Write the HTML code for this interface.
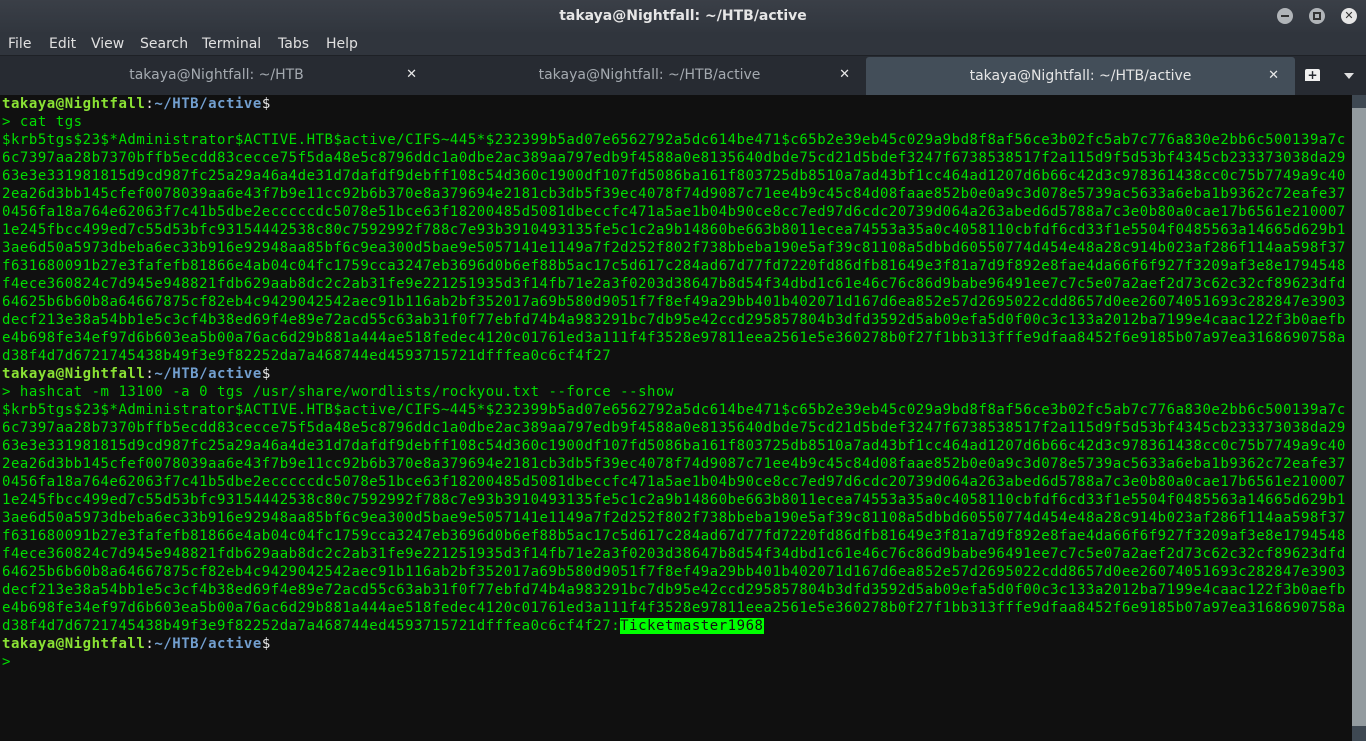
<!DOCTYPE html>
<html><head><meta charset="utf-8"><style>
*{margin:0;padding:0;box-sizing:border-box}
body{width:1366px;height:741px;overflow:hidden;background:#101010;font-family:"DejaVu Sans","Liberation Sans",sans-serif;position:relative}
#title{position:absolute;left:0;top:0;width:1366px;height:32px;background:linear-gradient(#3a3f47,#31363e);color:#e6e6e6;font-size:14px;font-weight:bold;text-align:center;line-height:32px}
#menu{position:absolute;left:0;top:32px;width:1366px;height:24px;background:#30353d;color:#e0e0e0;font-size:14px;line-height:24px}
#menu span{position:absolute}
#tabs{position:absolute;left:0;top:55px;width:1366px;height:40px;background:#272b32;border-top:1px solid #1e2126}
.tab{position:absolute;top:0;height:40px;color:#a4aab0;font-size:14px;line-height:38px;text-align:center}
.tab .x{position:absolute;right:16px;top:0;color:#e8e8e8;font-size:13px;font-weight:bold}
.act{background:#434e59;color:#e6e6e6;border-radius:3px 3px 0 0;top:1px;height:38px}
.wb{position:absolute;top:8px;width:16px;height:16px;border-radius:50%;background:#b0b4b8}
#term{position:absolute;left:2px;top:95px;font-family:"DejaVu Sans Mono","Liberation Mono",monospace;font-size:14px;letter-spacing:0.53px;line-height:18px;color:#00dd00;white-space:pre}
.u{color:#8ae234;font-weight:bold}.p{color:#729fcf;font-weight:bold}.w{color:#e8e8e8}
.hl{background:#00ff00;color:#101010}
#sb{position:absolute;left:1352px;top:95px;width:14px;height:646px;background:#3e4852}
#thumb{position:absolute;left:1352px;top:108px;width:14px;height:618px;background:#939b9f}
</style></head><body>
<div id="title">takaya@Nightfall: ~/HTB/active</div>
<div class="wb" style="left:1277px"><div style="position:absolute;left:4px;top:7px;width:8px;height:2px;background:#333"></div></div>
<div class="wb" style="left:1309px"><div style="position:absolute;left:4px;top:4px;width:8px;height:8px;border:2px solid #333"></div></div>
<div class="wb" style="left:1341px;background:#e6e6e6;color:#333;font-size:11px;line-height:16px;text-align:center;font-weight:bold">✕</div>
<div id="menu"><span style="left:8px">File</span><span style="left:49px">Edit</span><span style="left:91px">View</span><span style="left:140px">Search</span><span style="left:202px">Terminal</span><span style="left:278px">Tabs</span><span style="left:326px">Help</span></div>
<div id="tabs">
<div class="tab" style="left:0;width:433px">takaya@Nightfall: ~/HTB<span class="x">✕</span></div>
<div class="tab" style="left:433px;width:433px">takaya@Nightfall: ~/HTB/active<span class="x">✕</span></div>
<div class="tab act" style="left:866px;width:429px">takaya@Nightfall: ~/HTB/active<span class="x">✕</span></div>
<div style="position:absolute;left:1305px;top:13px;width:15px;height:12px;background:#f0f0f0;border-radius:2px 2px 0 0;color:#272b32;font-size:12px;line-height:12px;text-align:center;font-weight:bold">+</div>
<div style="position:absolute;left:1344px;top:17px;border-left:5px solid transparent;border-right:5px solid transparent;border-top:6px solid #e0e0e0"></div>
</div>
<div id="sb"></div><div id="thumb"></div>
<div id="term"><span class="u">takaya@Nightfall</span><span class="w">:</span><span class="p">~/HTB/active</span><span class="w">$</span>
&gt; cat tgs
$krb5tgs$23$*Administrator$ACTIVE.HTB$active/CIFS~445*$232399b5ad07e6562792a5dc614be471$c65b2e39eb45c029a9bd8f8af56ce3b02fc5ab7c776a830e2bb6c500139a7c
6c7397aa28b7370bffb5ecdd83cecce75f5da48e5c8796ddc1a0dbe2ac389aa797edb9f4588a0e8135640dbde75cd21d5bdef3247f6738538517f2a115d9f5d53bf4345cb233373038da29
63e3e331981815d9cd987fc25a29a46a4de31d7dafdf9debff108c54d360c1900df107fd5086ba161f803725db8510a7ad43bf1cc464ad1207d6b66c42d3c978361438cc0c75b7749a9c40
2ea26d3bb145cfef0078039aa6e43f7b9e11cc92b6b370e8a379694e2181cb3db5f39ec4078f74d9087c71ee4b9c45c84d08faae852b0e0a9c3d078e5739ac5633a6eba1b9362c72eafe37
0456fa18a764e62063f7c41b5dbe2ecccccdc5078e51bce63f18200485d5081dbeccfc471a5ae1b04b90ce8cc7ed97d6cdc20739d064a263abed6d5788a7c3e0b80a0cae17b6561e210007
1e245fbcc499ed7c55d53bfc93154442538c80c7592992f788c7e93b3910493135fe5c1c2a9b14860be663b8011ecea74553a35a0c4058110cbfdf6cd33f1e5504f0485563a14665d629b1
3ae6d50a5973dbeba6ec33b916e92948aa85bf6c9ea300d5bae9e5057141e1149a7f2d252f802f738bbeba190e5af39c81108a5dbbd60550774d454e48a28c914b023af286f114aa598f37
f631680091b27e3fafefb81866e4ab04c04fc1759cca3247eb3696d0b6ef88b5ac17c5d617c284ad67d77fd7220fd86dfb81649e3f81a7d9f892e8fae4da66f6f927f3209af3e8e1794548
f4ece360824c7d945e948821fdb629aab8dc2c2ab31fe9e221251935d3f14fb71e2a3f0203d38647b8d54f34dbd1c61e46c76c86d9babe96491ee7c7c5e07a2aef2d73c62c32cf89623dfd
64625b6b60b8a64667875cf82eb4c9429042542aec91b116ab2bf352017a69b580d9051f7f8ef49a29bb401b402071d167d6ea852e57d2695022cdd8657d0ee26074051693c282847e3903
decf213e38a54bb1e5c3cf4b38ed69f4e89e72acd55c63ab31f0f77ebfd74b4a983291bc7db95e42ccd295857804b3dfd3592d5ab09efa5d0f00c3c133a2012ba7199e4caac122f3b0aefb
e4b698fe34ef97d6b603ea5b00a76ac6d29b881a444ae518fedec4120c01761ed3a111f4f3528e97811eea2561e5e360278b0f27f1bb313fffe9dfaa8452f6e9185b07a97ea3168690758a
d38f4d7d6721745438b49f3e9f82252da7a468744ed4593715721dfffea0c6cf4f27
<span class="u">takaya@Nightfall</span><span class="w">:</span><span class="p">~/HTB/active</span><span class="w">$</span>
&gt; hashcat -m 13100 -a 0 tgs /usr/share/wordlists/rockyou.txt --force --show
$krb5tgs$23$*Administrator$ACTIVE.HTB$active/CIFS~445*$232399b5ad07e6562792a5dc614be471$c65b2e39eb45c029a9bd8f8af56ce3b02fc5ab7c776a830e2bb6c500139a7c
6c7397aa28b7370bffb5ecdd83cecce75f5da48e5c8796ddc1a0dbe2ac389aa797edb9f4588a0e8135640dbde75cd21d5bdef3247f6738538517f2a115d9f5d53bf4345cb233373038da29
63e3e331981815d9cd987fc25a29a46a4de31d7dafdf9debff108c54d360c1900df107fd5086ba161f803725db8510a7ad43bf1cc464ad1207d6b66c42d3c978361438cc0c75b7749a9c40
2ea26d3bb145cfef0078039aa6e43f7b9e11cc92b6b370e8a379694e2181cb3db5f39ec4078f74d9087c71ee4b9c45c84d08faae852b0e0a9c3d078e5739ac5633a6eba1b9362c72eafe37
0456fa18a764e62063f7c41b5dbe2ecccccdc5078e51bce63f18200485d5081dbeccfc471a5ae1b04b90ce8cc7ed97d6cdc20739d064a263abed6d5788a7c3e0b80a0cae17b6561e210007
1e245fbcc499ed7c55d53bfc93154442538c80c7592992f788c7e93b3910493135fe5c1c2a9b14860be663b8011ecea74553a35a0c4058110cbfdf6cd33f1e5504f0485563a14665d629b1
3ae6d50a5973dbeba6ec33b916e92948aa85bf6c9ea300d5bae9e5057141e1149a7f2d252f802f738bbeba190e5af39c81108a5dbbd60550774d454e48a28c914b023af286f114aa598f37
f631680091b27e3fafefb81866e4ab04c04fc1759cca3247eb3696d0b6ef88b5ac17c5d617c284ad67d77fd7220fd86dfb81649e3f81a7d9f892e8fae4da66f6f927f3209af3e8e1794548
f4ece360824c7d945e948821fdb629aab8dc2c2ab31fe9e221251935d3f14fb71e2a3f0203d38647b8d54f34dbd1c61e46c76c86d9babe96491ee7c7c5e07a2aef2d73c62c32cf89623dfd
64625b6b60b8a64667875cf82eb4c9429042542aec91b116ab2bf352017a69b580d9051f7f8ef49a29bb401b402071d167d6ea852e57d2695022cdd8657d0ee26074051693c282847e3903
decf213e38a54bb1e5c3cf4b38ed69f4e89e72acd55c63ab31f0f77ebfd74b4a983291bc7db95e42ccd295857804b3dfd3592d5ab09efa5d0f00c3c133a2012ba7199e4caac122f3b0aefb
e4b698fe34ef97d6b603ea5b00a76ac6d29b881a444ae518fedec4120c01761ed3a111f4f3528e97811eea2561e5e360278b0f27f1bb313fffe9dfaa8452f6e9185b07a97ea3168690758a
d38f4d7d6721745438b49f3e9f82252da7a468744ed4593715721dfffea0c6cf4f27:<span class="hl">Ticketmaster1968</span>
<span class="u">takaya@Nightfall</span><span class="w">:</span><span class="p">~/HTB/active</span><span class="w">$</span>
&gt;</div>
</body></html>
